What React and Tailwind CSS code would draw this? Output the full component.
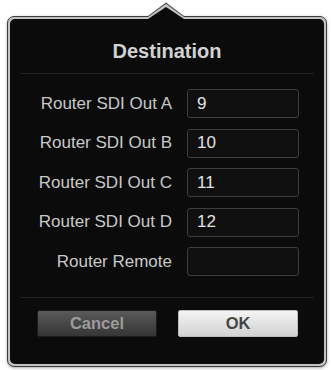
import React from 'react';

const rows = [
  { label: 'Router SDI Out A', value: '9' },
  { label: 'Router SDI Out B', value: '10' },
  { label: 'Router SDI Out C', value: '11' },
  { label: 'Router SDI Out D', value: '12' },
  { label: 'Router Remote', value: '' },
];

const App = () => {
  return (
    <div
      className="relative w-[331px] h-[370px] bg-white pt-[16px] pl-[7px] overflow-hidden"
      style={{ fontFamily: '"Liberation Sans", Arial, sans-serif' }}
    >
      {/* Popover arrow */}
      <svg className="absolute left-[148px] top-[2px]" width="36" height="22" viewBox="0 0 36 22">
        <polygon points="0,14 18,0.5 36,14 36,22 0,22" fill="#3e3e3e" />
        <polygon points="0,15 18,1.8 36,15 36,22 0,22" fill="#c2c2c2" />
        <polygon points="0,17 18,5 36,17 36,22 0,22" fill="#0b0b0b" />
      </svg>

      {/* Frame */}
      <div className="w-[320px] rounded-[7px] border border-[#3c3c3c] bg-[#c2c2c2] p-[2px] shadow-[0_1px_3px_rgba(0,0,0,0.35)]">
        <div className="rounded-[5px] bg-[#0b0b0b] pt-[20px] pb-[27px]">
          <h1 className="text-center text-[20px] leading-[24px] font-bold text-[#d2d2d2]">
            Destination
          </h1>

          <div className="mx-[10px] mt-[10px] border-t border-[#202020]"></div>

          <div className="mt-[15px] flex flex-col gap-[10.5px]">
            {rows.map((row) => (
              <div key={row.label} className="flex items-center h-[29px]">
                <div className="w-[162px] text-right text-[17px] text-[#c8c8c8] whitespace-nowrap">
                  {row.label}
                </div>
                <div className="ml-[15px] w-[112px] h-[29px] rounded-[3px] border border-[#3d3d3d] bg-[#0f0f0f] flex items-center pl-[9px] text-[17px] text-[#e2e2e2]">
                  {row.value}
                </div>
              </div>
            ))}
          </div>

          <div className="mx-[10px] mt-[21px] border-t border-[#202020]"></div>

          <div className="mt-[12px] flex gap-[21px] pl-[27px]">
            <button className="w-[120px] h-[27px] rounded-[2px] border border-[#1c1c1c] bg-gradient-to-b from-[#5a5a5a] to-[#353535] text-[16.5px] font-bold text-[#9c9c9c]">
              Cancel
            </button>
            <button className="w-[120px] h-[27px] rounded-[2px] border border-[#bdbdbd] bg-gradient-to-b from-[#f4f4f4] to-[#d2d2d2] text-[16.5px] font-bold text-[#464646]">
              OK
            </button>
          </div>
        </div>
      </div>
    </div>
  );
};

export default App;
